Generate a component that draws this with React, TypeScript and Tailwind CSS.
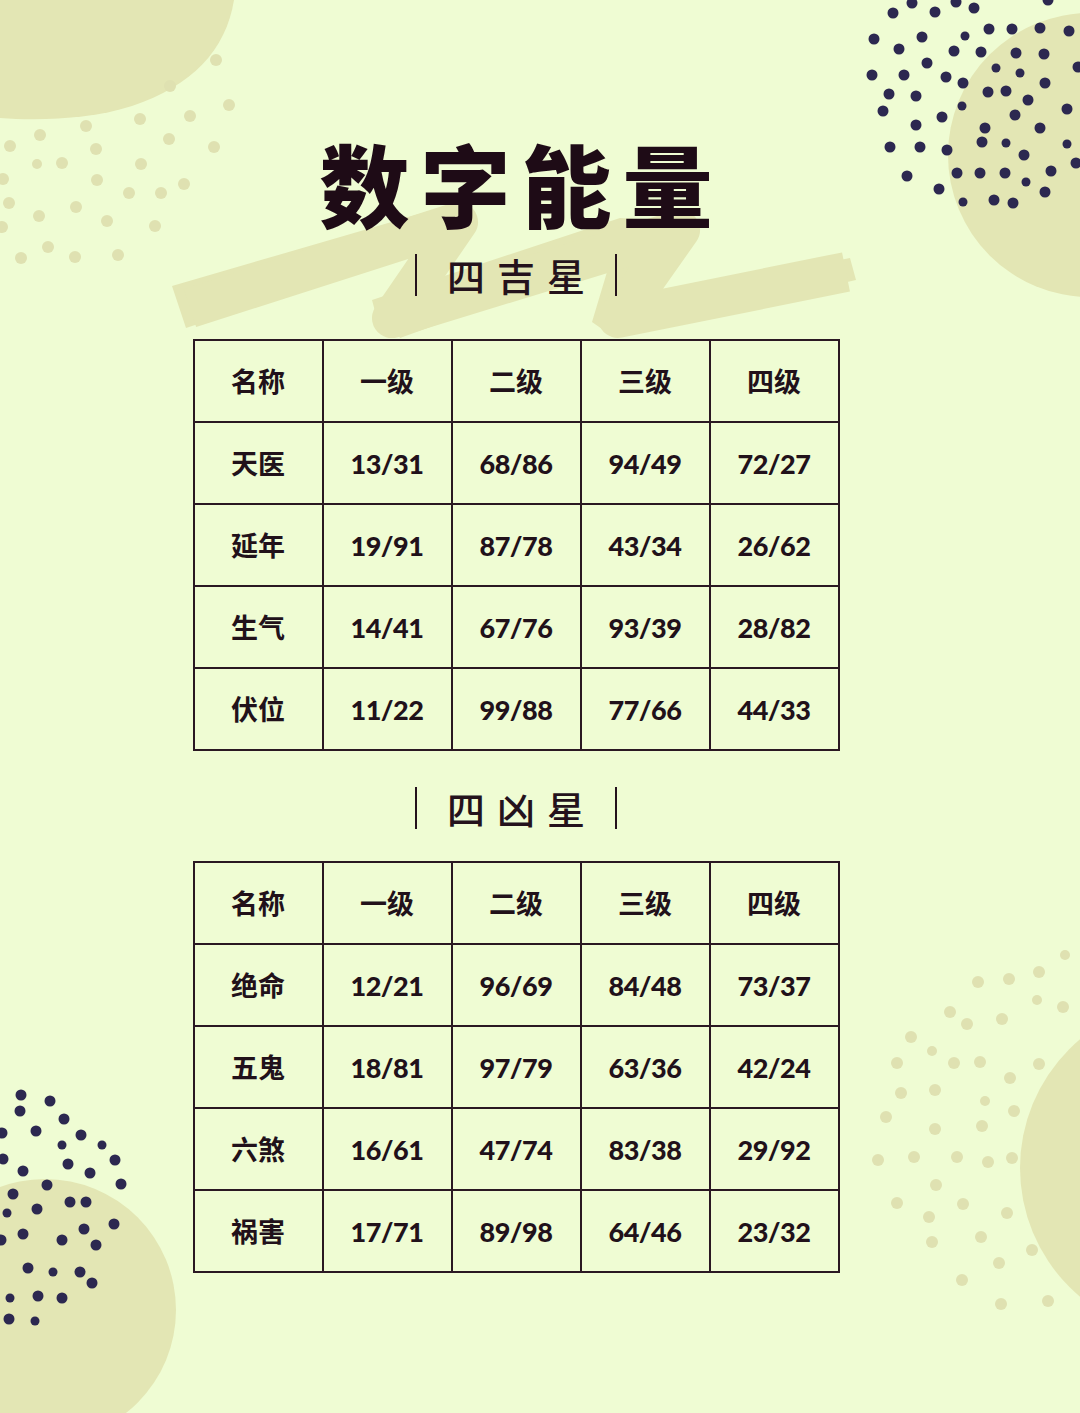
import React from "react"

// background dots, [x, y, r]
const navyTop: number[][] = [
  [912, 3, 5], [893, 13, 5], [935, 12, 5], [956, 2, 5], [974, 8, 5], [1048, 0, 5],
  [874, 39, 5], [922, 37, 5], [965, 36, 4], [989, 29, 5], [1012, 29, 5], [1040, 28, 5], [1069, 31, 5],
  [899, 49, 5], [954, 51, 5], [981, 52, 5], [1016, 53, 5], [1044, 54, 5], [927, 63, 5],
  [996, 68, 4], [1020, 73, 4], [872, 75, 5], [904, 75, 5], [946, 77, 5], [963, 83, 5], [1045, 83, 5],
  [1078, 67, 5], [889, 94, 5], [916, 96, 5], [988, 92, 5], [1006, 91, 5], [1028, 100, 5],
  [962, 106, 4], [883, 111, 5], [942, 117, 5], [1015, 115, 5], [1067, 109, 5], [916, 125, 5],
  [985, 128, 5], [1040, 128, 5], [982, 142, 5], [1006, 143, 4], [1067, 144, 4], [890, 147, 5],
  [920, 147, 5], [947, 150, 5], [1024, 155, 5], [1076, 163, 5], [957, 173, 5], [980, 173, 5],
  [1005, 173, 5], [1051, 171, 5], [1026, 182, 4], [907, 176, 5], [939, 189, 5], [1045, 192, 5],
  [963, 202, 4], [994, 200, 5], [1013, 203, 5],
]

const navyBottom: number[][] = [
  [21, 1095, 5], [50, 1101, 5], [20, 1111, 5], [64, 1119, 5], [2, 1133, 5], [36, 1131, 5],
  [81, 1135, 5], [62, 1145, 4], [102, 1145, 4], [3, 1159, 5], [115, 1160, 5], [68, 1164, 5],
  [23, 1171, 5], [90, 1173, 5], [47, 1185, 5], [121, 1184, 5], [13, 1194, 5], [70, 1202, 5],
  [86, 1202, 5], [7, 1213, 4], [37, 1209, 5], [114, 1224, 5], [84, 1229, 5], [23, 1234, 5],
  [1, 1240, 5], [62, 1240, 5], [96, 1245, 5], [28, 1268, 5], [53, 1272, 4], [80, 1272, 5],
  [92, 1283, 5], [10, 1298, 4], [38, 1296, 5], [62, 1298, 5], [9, 1319, 5], [35, 1321, 4],
]

const beigeTop: number[][] = [
  [216, 60, 6], [170, 86, 6], [229, 105, 6], [140, 119, 6], [190, 116, 6], [86, 126, 6],
  [40, 135, 6], [169, 139, 6], [214, 147, 6], [10, 146, 6], [96, 149, 6], [37, 164, 5],
  [62, 163, 6], [141, 164, 6], [3, 179, 6], [97, 180, 6], [184, 184, 6], [129, 193, 6],
  [161, 193, 6], [9, 203, 6], [76, 207, 6], [39, 216, 6], [107, 221, 6], [155, 226, 6],
  [2, 227, 6], [48, 247, 6], [21, 258, 6], [75, 257, 6], [118, 255, 6],
]

const beigeBottom: number[][] = [
  [1065, 955, 5], [1039, 972, 6], [1009, 979, 6], [978, 982, 6], [1037, 1000, 5], [1063, 1007, 6],
  [950, 1012, 6], [1002, 1019, 6], [967, 1024, 6], [911, 1037, 6], [932, 1051, 5], [897, 1063, 6],
  [954, 1063, 6], [980, 1062, 6], [1039, 1064, 6], [1010, 1078, 6], [901, 1093, 6], [935, 1090, 6],
  [985, 1101, 5], [1014, 1111, 6], [886, 1117, 6], [982, 1126, 6], [935, 1129, 6], [878, 1160, 6],
  [914, 1157, 6], [957, 1157, 6], [988, 1162, 6], [1012, 1158, 6], [936, 1185, 6], [897, 1203, 6],
  [963, 1204, 6], [929, 1217, 6], [1007, 1213, 6], [932, 1242, 6], [981, 1237, 6], [1032, 1250, 6],
  [999, 1263, 6], [962, 1280, 6], [1001, 1304, 6], [1048, 1301, 6],
]

const header = ["名称", "一级", "二级", "三级", "四级"]

const goodStars = [
  ["天医", "13/31", "68/86", "94/49", "72/27"],
  ["延年", "19/91", "87/78", "43/34", "26/62"],
  ["生气", "14/41", "67/76", "93/39", "28/82"],
  ["伏位", "11/22", "99/88", "77/66", "44/33"],
]

const badStars = [
  ["绝命", "12/21", "96/69", "84/48", "73/37"],
  ["五鬼", "18/81", "97/79", "63/36", "42/24"],
  ["六煞", "16/61", "47/74", "83/38", "29/92"],
  ["祸害", "17/71", "89/98", "64/46", "23/32"],
]

function Backdrop() {
  return (
    <svg className="absolute inset-0" width="1080" height="1413" viewBox="0 0 1080 1413">
      <path d="M0,0 L234,0 C226,50 192,86 132,106 C92,119 40,121 0,118 Z" fill="#e3e6b4" />
      <circle cx="1090" cy="155" r="142" fill="#e3e6b4" />
      <circle cx="45" cy="1310" r="131" fill="#e3e6b4" />
      <circle cx="1188" cy="1168" r="168" fill="#e3e6b4" />
      {/* brush stroke behind the title */}
      <path
        d="M172,286 L450,205 L470,222 L405,330 L380,330 L372,300 L620,218 L690,222 L640,300 L850,258 L856,280 L612,336 L592,322 L610,262 L400,338 L390,318 L456,238 L186,328 Z"
        fill="#e3e6b4"
        strokeLinejoin="round"
      />
      <path
        d="M190,308 L458,222 L392,318 L680,230 L618,318 L846,272"
        fill="none"
        stroke="#e3e6b4"
        strokeWidth="40"
        strokeLinejoin="round"
      />
      {beigeTop.concat(beigeBottom).map(([x, y, r], i) => (
        <circle key={"b" + i} cx={x} cy={y} r={r} fill="#dfe1b1" />
      ))}
      {navyTop.concat(navyBottom).map(([x, y, r], i) => (
        <circle key={"n" + i} cx={x} cy={y} r={r + 0.5} fill="#2c2850" />
      ))}
    </svg>
  )
}

function Subtitle({ text }: { text: string }) {
  return (
    <div className="flex items-center justify-center gap-[30px] h-[42px]">
      <span className="block w-[2px] h-[42px] bg-[#24121c]" />
      <span className="text-[38px] leading-none tracking-[12px] mr-[-12px] font-medium text-[#24121c]">{text}</span>
      <span className="block w-[2px] h-[42px] bg-[#24121c]" />
    </div>
  )
}

function StarTable({ rows }: { rows: string[][] }) {
  return (
    <table className="border-collapse w-[647px] text-[#21111a]">
      <tbody>
        {[header, ...rows].map((row, i) => (
          <tr key={i}>
            {row.map((cell, j) => (
              <td
                key={j}
                className={
                  "border-2 border-[#2a1822] w-[129px] h-[82px] p-0 text-center leading-none " +
                  (i > 0 && j > 0 ? "text-[27px] font-black tracking-[-0.5px]" : "text-[27px] font-bold")
                }
              >
                {cell}
              </td>
            ))}
          </tr>
        ))}
      </tbody>
    </table>
  )
}

export default function App() {
  return (
    <div
      className="relative w-[1080px] h-[1413px] overflow-hidden bg-[#effcd3]"
      style={{ fontFamily: '"Lato", "Noto Sans CJK SC", sans-serif' }}
    >
      <Backdrop />
      <div className="relative ml-[192px] w-[648px] pt-[137px] flex flex-col items-center">
        <h1
          className="text-[90px] leading-none font-black tracking-[11px] mr-[-11px] text-[#1e0b16]"
          style={{ fontFamily: '"Noto Sans CJK SC", sans-serif' }}
        >
          数字能量
        </h1>
        <div className="mt-[27px]" style={{ fontFamily: '"Noto Sans CJK SC", sans-serif' }}>
          <Subtitle text="四吉星" />
        </div>
        <div className="mt-[43px]">
          <StarTable rows={goodStars} />
        </div>
        <div className="mt-[36px]" style={{ fontFamily: '"Noto Sans CJK SC", sans-serif' }}>
          <Subtitle text="四凶星" />
        </div>
        <div className="mt-[32px]">
          <StarTable rows={badStars} />
        </div>
      </div>
    </div>
  )
}
